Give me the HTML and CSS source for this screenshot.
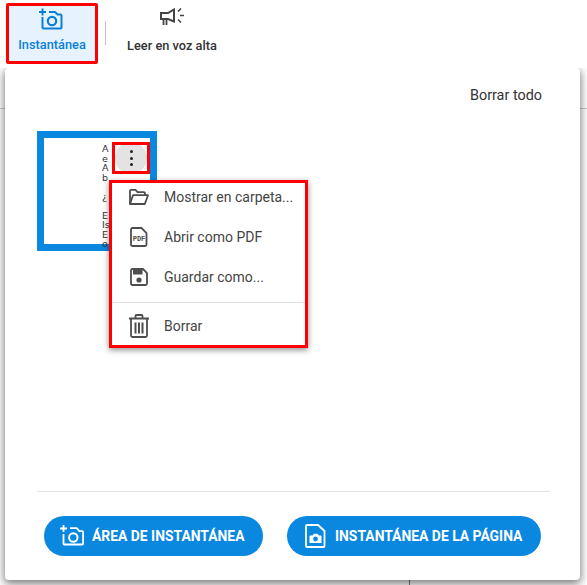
FILE: index.html
```html
<!DOCTYPE html>
<html lang="es">
<head>
<meta charset="utf-8">
<title>Instantánea</title>
<link rel="stylesheet" href="styles.css">
</head>
<body>
<header class="toolbar">
  <button class="tool tool-active">
    <svg class="tool-icon" width="24" height="22" viewBox="0 0 24 22" fill="none" stroke="#0a7fd6" stroke-width="2"><path d="M0 4h7M3.500 .5v7"/><path d="M3.500 9v10.500c0 .6.400 1 1 1h17c.6 0 1-.4 1-1V7.500c0-.6-.4-1-1-1h-3L16 4h-6"/><circle cx="13" cy="13" r="4.200" stroke-width="2.200"/></svg>
    <span>Instantánea</span>
  </button>
  <span class="tool-divider"></span>
  <button class="tool tool-plain">
    <svg class="tool-icon" width="24" height="18" viewBox="0 0 24 18" fill="none" stroke="#444" stroke-width="2"><path d="M1 5h7l6-3.500v12L8 11H1z"/><path d="M3.500 11v6M6.500 11v6" stroke-width="1.800"/><path d="M20 7.500h4M18 3.500l3-3M18 11.500l3 3" stroke-width="1.600"/></svg>
    <span>Leer en voz alta</span>
  </button>
</header>
<main class="backdrop">
  <section class="panel">
    <div class="panel-head"><button class="clear-all">Borrar todo</button></div>
    <div class="panel-body">
      <div class="thumb">
        <div class="thumb-text">A<br>e<br>A<br>b<br><br>¿<br><br>E<br>Is<br>E<br>o</div>
        <button class="kebab" aria-label="Más">
          <span class="kebab-circle"><i></i><i></i><i></i></span>
        </button>
      </div>
      <ul class="menu">
        <li class="menu-item">
          <span class="menu-icon"><svg width="20" height="16" viewBox="0 0 20 16" fill="none" stroke="#4d4d4d" stroke-width="1.800"><path d="M1 15V2c0-.7.400-1.100 1.100-1.100h4.400l2 2.200h6.400c.7 0 1.100.4 1.100 1.100v2"/><path d="M1 15l3-8.800h15l-3.200 8.800z" stroke-linejoin="round"/></svg></span>
          <span>Mostrar en carpeta...</span>
        </li>
        <li class="menu-item">
          <span class="menu-icon"><svg width="18" height="20" viewBox="0 0 18 20" fill="none" stroke="#4d4d4d" stroke-width="1.800"><path d="M2.500 1h9l5 5v11.500c0 .9-.6 1.500-1.500 1.500H2.500C1.600 19 1 18.400 1 17.500v-15C1 1.600 1.600 1 2.500 1z"/><text class="pdf-mark" x="9" y="13.800" text-anchor="middle">PDF</text></svg></span>
          <span>Abrir como PDF</span>
        </li>
        <li class="menu-item">
          <span class="menu-icon"><svg width="18" height="18" viewBox="0 0 18 18" fill="none" stroke="#4d4d4d" stroke-width="1.800"><path d="M2.500 1H13l4 4v10.500c0 .9-.6 1.500-1.500 1.500h-13C1.600 17 1 16.400 1 15.500v-13C1 1.600 1.600 1 2.500 1z"/><path d="M3 2h9.500v4.500H3z" fill="#4d4d4d" stroke="none"/><circle cx="9" cy="12" r="2.600" fill="#4d4d4d" stroke="none"/></svg></span>
          <span>Guardar como...</span>
        </li>
        <li class="menu-sep"></li>
        <li class="menu-item">
          <span class="menu-icon"><svg width="20" height="24" viewBox="0 0 20 24" fill="none" stroke="#4d4d4d" stroke-width="1.800"><path d="M0 4.500h20M6.500 4V2c0-.6.400-1 1-1h5c.6 0 1 .4 1 1v2"/><path d="M2 5v16.500c0 .9.600 1.500 1.500 1.500h13c.9 0 1.500-.6 1.500-1.500V5"/><path d="M6.500 8.500V19.500M10 8.500V19.500M13.500 8.500V19.500" stroke-width="2"/></svg></span>
          <span>Borrar</span>
        </li>
      </ul>
    </div>
    <footer class="panel-foot">
      <button class="pill pill-area">
        <svg width="24" height="24" viewBox="0 0 24 24" fill="none" stroke="#fff" stroke-width="1.800"><path d="M0 4.500h7M3.500 1v7"/><path d="M3.500 10v9.700c0 .5.300.8.800.8h18c.5 0 .8-.3.800-.8V8c0-.5-.3-.8-.8-.8h-3l-2.600-3H10"/><circle cx="13.300" cy="13.500" r="4.200" stroke-width="2"/></svg>
        <span>ÁREA DE INSTANTÁNEA</span>
      </button>
      <button class="pill pill-page">
        <svg width="21" height="24" viewBox="0 0 21 24" fill="none" stroke="#fff" stroke-width="1.800"><path d="M2 1h11l6.500 6v15c0 .6-.4 1-1 1H2c-.6 0-1-.4-1-1V2c0-.6.400-1 1-1z"/><path d="M4.500 12.500c0-.6.400-1 1-1h2l1.500-1.700h3.500l1.500 1.700h1.500c.6 0 1 .4 1 1V19H4.500z" fill="#fff" stroke="none"/><circle cx="10.500" cy="15" r="2.400" fill="#0a88df" stroke="none"/></svg>
        <span>INSTANTÁNEA DE LA PÁGINA</span>
      </button>
    </footer>
  </section>
</main>
</body>
</html>
```
FILE: styles.css
```css
* { box-sizing: border-box; }
html, body { margin: 0; padding: 0; }
body {
  width: 587px;
  height: 585px;
  overflow: hidden;
  background: #fff;
  font-family: Roboto, "Liberation Sans", sans-serif;
  display: flex;
  flex-direction: column;
}
button { font: inherit; background: none; border: 0; padding: 0; color: inherit; }

.toolbar {
  height: 68px;
  flex: none;
  display: flex;
  align-items: flex-start;
  padding: 3px 0 0 6px;
  background: #fff;
  position: relative;
  z-index: 2;
}
.tool {
  height: 61px;
  display: flex;
  flex-direction: column;
  align-items: center;
  font-size: 12.800px;
  font-weight: 500;
  white-space: nowrap;
}
.tool-icon { flex: none; }
.tool span { line-height: 16px; }
.tool-active {
  width: 92px;
  border: 3px solid #f00;
  background: #e6f3fe;
  color: #0a7fd6;
  border-radius: 2px;
}
.tool-active .tool-icon { margin: 2px 2px 0 0; }
.tool-active span { margin-top: 7px; }
.tool-plain { width: 108px; margin-left: 12px; color: #333; }
.tool-plain .tool-icon { margin: 5px 0 0 0; }
.tool-plain span { margin-top: 12px; }
.tool-divider {
  width: 1px;
  height: 24px;
  background: #c4c4c4;
  margin: 18px 0 0 7px;
  flex: none;
}

.backdrop {
  flex: 1;
  min-height: 0;
  padding: 0 7px 5px 5px;
  display: flex;
  background:
    linear-gradient(#c8c8c8, #c8c8c8) 0 40px / 100% 1px no-repeat,
    linear-gradient(#777, #777) 409px 100% / 1px 10px no-repeat,
    #fff;
}
.panel {
  flex: 1;
  display: flex;
  flex-direction: column;
  background: #fff;
  border-radius: 4px;
  box-shadow: 0 3px 9px 1px rgba(0, 0, 0, 0.5);
  padding: 0 30px 24px 32px;
}
.panel-head {
  height: 63px;
  flex: none;
  display: flex;
  justify-content: flex-end;
  padding-top: 19px;
}
.clear-all {
  height: 18px;
  font-size: 14.400px;
  line-height: 18px;
  color: #333;
  margin-right: 8px;
}
.panel-body { flex: 1; position: relative; }
.thumb {
  width: 120px;
  height: 120px;
  border: 7px solid #0a88df;
  position: relative;
  background: #fff;
}
.thumb-text {
  position: absolute;
  left: 58px;
  top: 6px;
  font-family: "DejaVu Sans", sans-serif;
  font-size: 9.500px;
  line-height: 9.500px;
  color: #333;
  height: 106px;
  overflow: hidden;
}
.kebab {
  position: absolute;
  left: 68px;
  top: 4px;
  width: 38px;
  height: 32px;
  border: 3px solid #f00;
  background: #fff;
  display: flex;
  align-items: center;
  justify-content: center;
  overflow: hidden;
}
.kebab-circle {
  width: 32px;
  height: 32px;
  flex: none;
  border-radius: 50%;
  background: #e3e3e3;
  display: flex;
  flex-direction: column;
  align-items: center;
  justify-content: center;
  gap: 3.500px;
}
.kebab-circle i {
  width: 3px;
  height: 3px;
  border-radius: 50%;
  background: #222;
}
.menu {
  position: absolute;
  left: 72px;
  top: 49px;
  width: 199px;
  height: 168px;
  margin: 0;
  padding: 0;
  list-style: none;
  background: #fff;
  border: 3px solid #f00;
  box-shadow: 0 2px 6px rgba(0, 0, 0, 0.45);
  z-index: 1;
  display: flex;
  flex-direction: column;
}
.menu-item {
  height: 28px;
  flex: none;
  margin-bottom: 12px;
  display: flex;
  align-items: center;
  gap: 13px;
  padding-left: 15px;
  font-size: 14px;
  color: #444;
  white-space: nowrap;
}
.menu-icon {
  width: 24px;
  flex: none;
  display: flex;
  justify-content: center;
}
.menu-sep { height: 1px; flex: none; background: #e3e3e3; margin: -1px 0 9px; }
.pdf-mark { font-size: 7px; font-weight: 700; fill: #4d4d4d; stroke: none; font-family: "Liberation Mono", monospace; }

.panel-foot {
  flex: none;
  height: 65px;
  border-top: 1px solid #e3e3e3;
  display: flex;
  align-items: flex-end;
  gap: 24px;
  padding-left: 7px;
}
.pill {
  height: 40px;
  flex: none;
  border-radius: 20px;
  background: #0a88df;
  color: #fff;
  font-size: 13.900px;
  font-weight: 700;
  display: flex;
  align-items: center;
  white-space: nowrap;
}
.pill-area { width: 219px; gap: 8px; padding-left: 16px; }
.pill-page { width: 254px; gap: 9px; padding-left: 18px; }
```
